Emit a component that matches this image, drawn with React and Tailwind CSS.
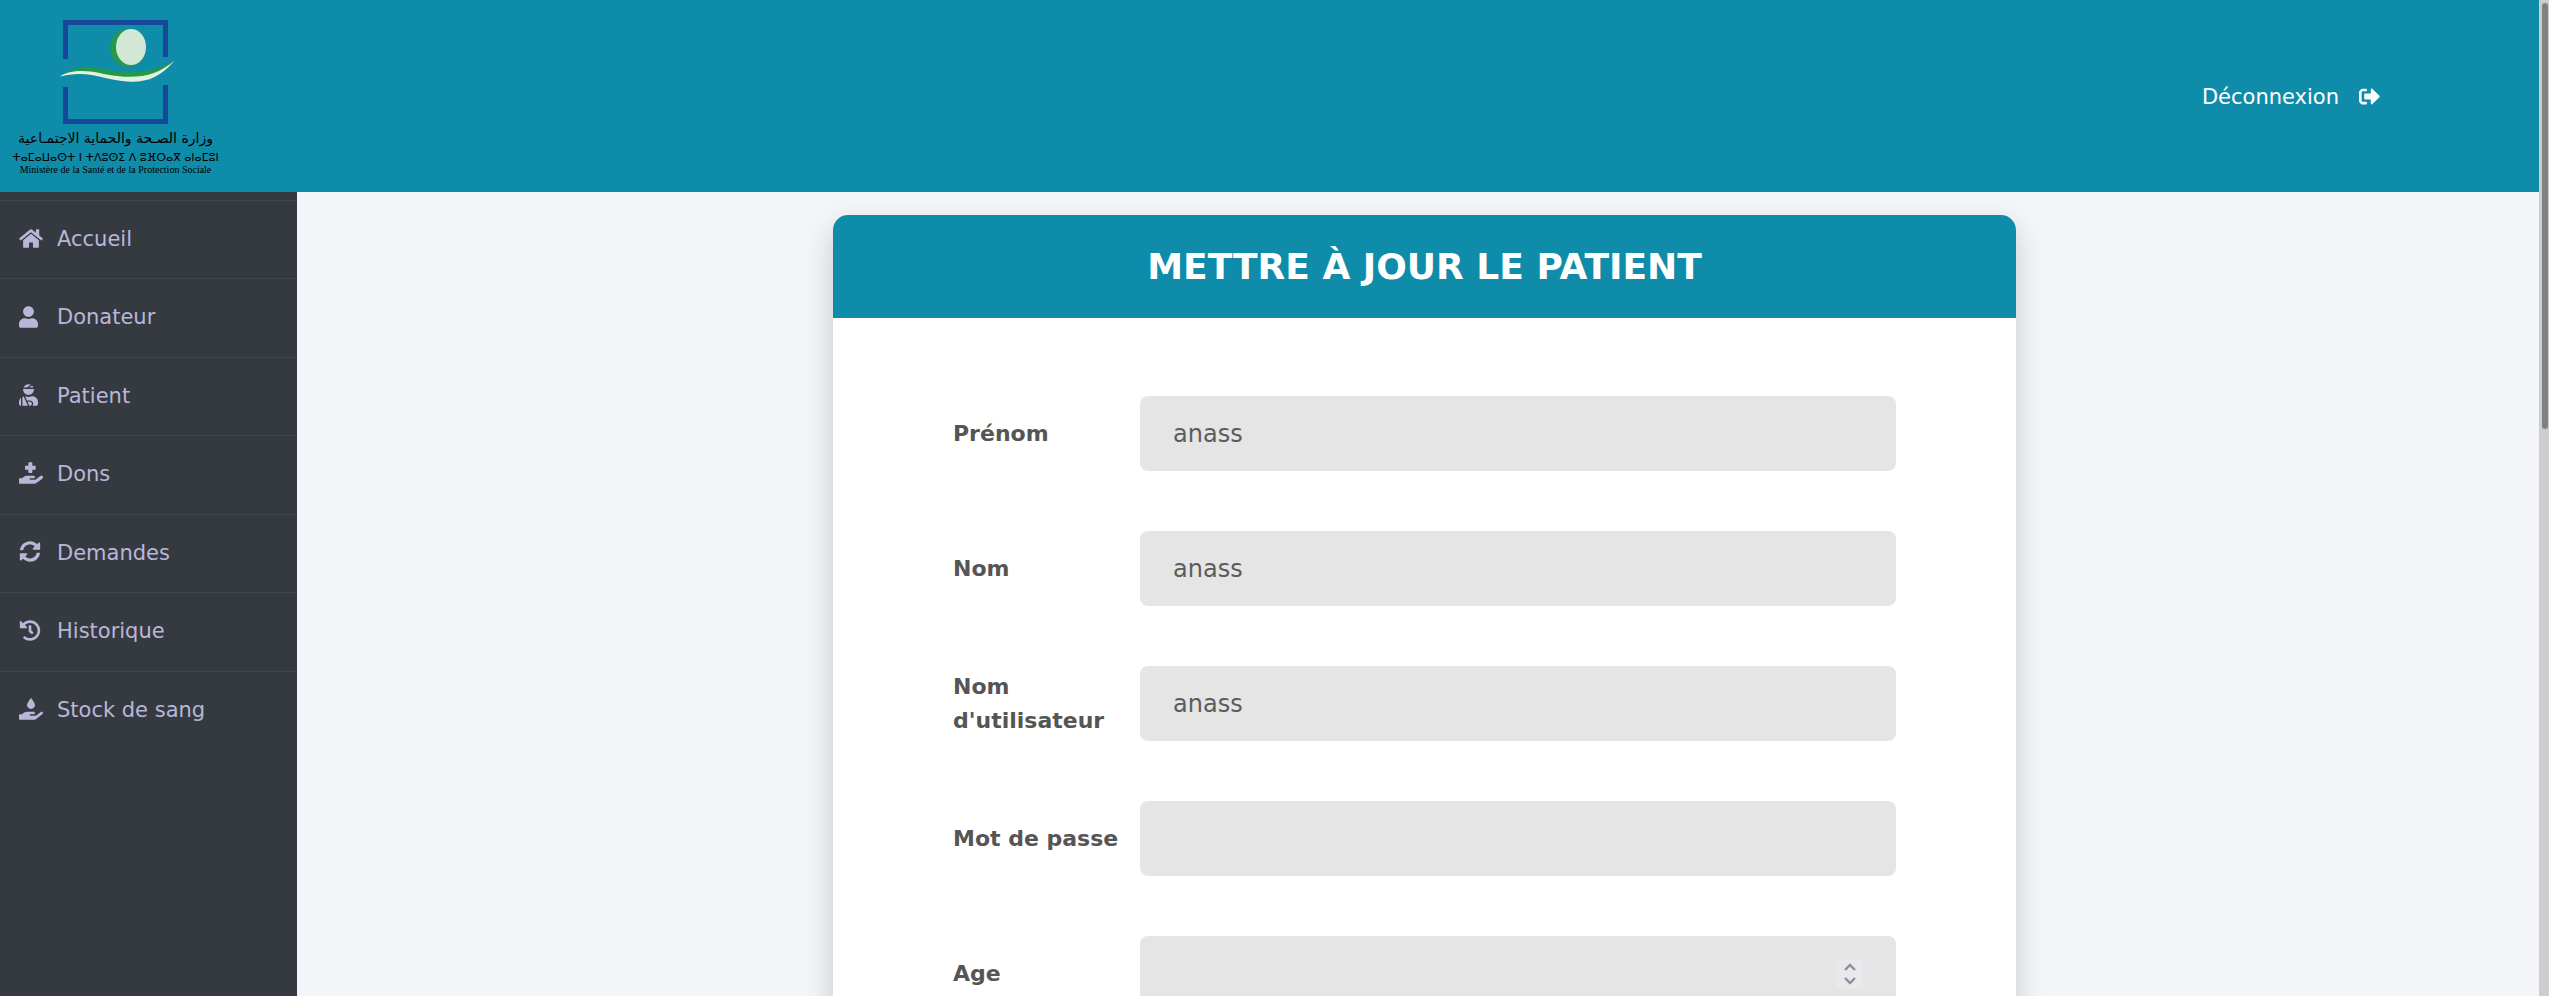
import { FaHome, FaUser, FaUserInjured, FaHandHoldingMedical, FaSyncAlt, FaHistory, FaHandHoldingWater, FaSignOutAlt } from 'react-icons/fa';

const menu = [
  { label: 'Accueil', Icon: FaHome, size: 'w-6 h-[21px]' },
  { label: 'Donateur', Icon: FaUser, size: 'w-[19px] h-[22px]' },
  { label: 'Patient', Icon: FaUserInjured, size: 'w-[19px] h-[22px]' },
  { label: 'Dons', Icon: FaHandHoldingMedical, size: 'w-6 h-[22px]' },
  { label: 'Demandes', Icon: FaSyncAlt, size: 'w-[22px] h-[21px]' },
  { label: 'Historique', Icon: FaHistory, size: 'w-[22px] h-[21px]' },
  { label: 'Stock de sang', Icon: FaHandHoldingWater, size: 'w-6 h-[22px]' },
];

const fields = [
  { id: 'prenom', label: 'Prénom', type: 'text', value: 'anass' },
  { id: 'nom', label: 'Nom', type: 'text', value: 'anass' },
  { id: 'username', label: "Nom d'utilisateur", type: 'text', value: 'anass' },
  { id: 'password', label: 'Mot de passe', type: 'password', value: '' },
  { id: 'age', label: 'Age', type: 'number', value: '' },
];

function Logo() {
  return (
    <a href="#accueil" className="flex w-[189px] flex-col items-center pt-[3px] whitespace-nowrap text-black">
      <svg viewBox="60 20 116 105" className="ml-1 h-[105px] w-[116px]" aria-hidden="true">
        <path d="M65.5 59V22.5H165.500V57M65.500 87V121.500H165.500V85" fill="none" stroke="#164798" strokeWidth="5" />
        <ellipse cx="128" cy="48" rx="18" ry="19" fill="#24994a" />
        <ellipse cx="131" cy="47" rx="15" ry="18" fill="#d3e8d4" />
        <path d="M60 76.500C75 64 95 67 110 70.500C133 74 155 72 174.500 60.500C157 78 142 82 127 81C108 80 96 73 80 73C72 73 67 74.500 60 76.500Z" fill="#24994a" />
        <path d="M60 76.500C70 69.500 88 70 104 74C134 80 156 77 174.500 60.500C160 78 145 83 127 81.500C108 80 96 74 80 74C72 74 67 75 60 76.500Z" fill="#e3f1e1" />
      </svg>
      <span lang="ar" dir="rtl" className="text-[14px] leading-[26px]">وزارة الصـحة والحماية الاجتمـاعية</span>
      <span className="text-[11px] leading-[14px]">ⵜⴰⵎⴰⵡⴰⵙⵜ ⵏ ⵜⴷⵓⵙⵉ ⴷ ⵓⴼⵔⴰⴳ ⴰⵏⴰⵎⵓⵏ</span>
      <span className="font-['Liberation_Serif',serif] text-[10px] leading-[10px]">Ministère de la Santé et de la Protection Sociale</span>
    </a>
  );
}

function Spinner() {
  return (
    <div className="absolute inset-y-0 right-[33px] flex flex-col justify-center">
      <button type="button" aria-label="Augmenter" className="flex h-[14px] w-[27px] items-center justify-center bg-[#e9e9ed]">
        <svg viewBox="0 0 12 8" className="h-2 w-3"><path d="M1 7L6 2L11 7" fill="none" stroke="#8f8f9d" strokeWidth="2.400" /></svg>
      </button>
      <button type="button" aria-label="Diminuer" className="flex h-[14px] w-[27px] items-center justify-center bg-[#e9e9ed]">
        <svg viewBox="0 0 12 8" className="h-2 w-3"><path d="M1 1L6 6L11 1" fill="none" stroke="#8f8f9d" strokeWidth="2.400" /></svg>
      </button>
    </div>
  );
}

function Field({ id, label, type, value }) {
  return (
    <div className="flex items-center">
      <label htmlFor={id} className="w-[187px] shrink-0 text-[22px] leading-[34px] font-bold text-[#555555]">{label}</label>
      <div className="relative flex-1">
        <input
          id={id}
          type={type}
          defaultValue={value}
          className="block h-[75px] w-full appearance-none rounded-lg bg-[#e5e5e5] px-[33px] text-[24px] text-[#5c5c5c] outline-none [&::-webkit-inner-spin-button]:appearance-none"
        />
        {type === 'number' && <Spinner />}
      </div>
    </div>
  );
}

export default function App() {
  return (
    <div className="flex h-screen overflow-hidden bg-[#f3f5f9] font-['DejaVu_Sans',sans-serif]">
      <div className="flex min-w-0 flex-1 flex-col">
        <header className="flex h-48 shrink-0 items-center justify-between bg-[#0f8ca9] pr-[159px] pl-[21px]">
          <Logo />
          <a href="#deconnexion" className="flex items-center gap-5 pt-1 text-[21px] text-white">
            Déconnexion
            <FaSignOutAlt className="mb-[3px] h-[21px] w-[21px]" />
          </a>
        </header>
        <div className="flex min-h-0 flex-1">
          <nav className="w-[297px] shrink-0 bg-[#353a40] pt-2">
            <ul className="grid h-[549px] auto-rows-fr">
              {menu.map(({ label, Icon, size }) => (
                <li key={label} className="border-t border-[#40464c]">
                  <a href={'#' + label} className="flex h-full items-center pl-[19px] text-[21px] text-[#bab6d8]">
                    <span className="mb-[3px] flex w-[38px]">
                      <Icon className={size} />
                    </span>
                    {label}
                  </a>
                </li>
              ))}
            </ul>
          </nav>
          <main className="flex min-w-0 flex-1 items-start justify-center overflow-hidden pt-[23px] pl-[13px]">
            <section className="w-full max-w-[1183px] overflow-hidden rounded-[15px] bg-white shadow-[0_12px_30px_rgba(0,0,0,0.18)]">
              <h1 className="bg-[#0f8ca9] py-6 text-center text-[36px] leading-[55px] font-bold text-white">METTRE À JOUR LE PATIENT</h1>
              <form className="flex flex-col gap-[60px] px-[120px] py-[78px]">
                {fields.map((field) => <Field key={field.id} {...field} />)}
              </form>
            </section>
          </main>
        </div>
      </div>
      <div className="w-[10px] shrink-0 bg-[#cdcdcd] py-[3px] pr-px pl-[3px]" aria-hidden="true">
        <div className="h-[43%] rounded-full bg-[#7f8282]" />
      </div>
    </div>
  );
}
